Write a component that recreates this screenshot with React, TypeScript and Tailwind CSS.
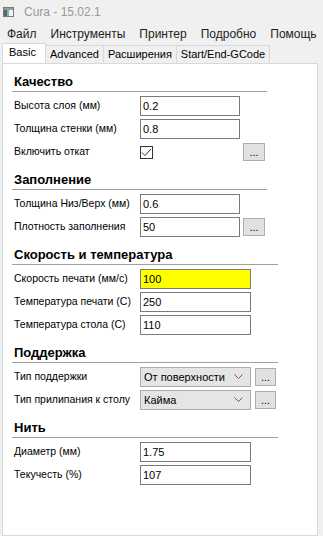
import React from 'react';

const ui = { fontFamily: '"Liberation Sans", Arial, sans-serif' };

const Chevron = () => (
  <svg width="9" height="6" viewBox="0 0 9 6" className="shrink-0">
    <path d="M0.5 0.5 L4.5 4.5 L8.5 0.5" fill="none" stroke="#606060" strokeWidth="1" />
  </svg>
);

const Dots: React.FC<{ w?: string }> = ({ w = 'w-[22px]' }) => (
  <div
    className={`${w} h-[18px] bg-[#e1e1e1] border border-[#adadad] flex items-center justify-center text-[11px] leading-none text-black`}
  >
    ...
  </div>
);

const Field: React.FC<{ value: string; w: string; yellow?: boolean }> = ({ value, w, yellow }) => (
  <div
    className={`${w} h-[20px] border border-[#7a7a7a] flex items-center pl-[2px] text-[11px] text-black ${
      yellow ? 'bg-[#ffff00]' : 'bg-white'
    }`}
  >
    {value}
  </div>
);

const Select: React.FC<{ value: string }> = ({ value }) => (
  <div className="w-[111px] h-[20px] bg-[#e5e5e5] border border-[#acacac] flex items-center justify-between pl-[3px] pr-[7px] text-[11px] text-black">
    <span>{value}</span>
    <Chevron />
  </div>
);

const Row: React.FC<{ label: string; children: React.ReactNode }> = ({ label, children }) => (
  <div className="h-[20px] flex items-center">
    <div className="w-[128px] pl-[2px] text-[10.5px] text-black whitespace-nowrap">{label}</div>
    {children}
  </div>
);

const Section: React.FC<{ title: string; lineW: string; children: React.ReactNode }> = ({
  title,
  lineW,
  children,
}) => (
  <div>
    <div className={`${lineW} h-[28px] border-b border-[#a0a0a0] flex items-end pl-[2px] pb-[1px]`}>
      <span className="text-[13px] leading-[16px] font-bold text-black">{title}</span>
    </div>
    <div className="mt-[4px] flex flex-col gap-[3px]">{children}</div>
  </div>
);

export default function App() {
  return (
    <div className="w-[323px] h-[536px] bg-[#f0f0f0] flex flex-col overflow-hidden" style={ui}>
      {/* title bar */}
      <div className="h-[24px] flex items-center pl-[3px] shrink-0">
        <svg width="11" height="10" viewBox="0 0 11 10">
          <rect x="0.5" y="0.5" width="10" height="9" fill="#f4f4f4" stroke="#7a7a7a" />
          <rect x="1" y="1" width="9" height="2" fill="#9a9a9a" />
          <rect x="1" y="3" width="3" height="6" fill="#4a6a78" />
          <rect x="4" y="3" width="2" height="6" fill="#7fb0a8" />
        </svg>
        <span className="ml-[10px] text-[12px] text-[#999]">Cura - 15.02.1</span>
      </div>

      {/* menu bar */}
      <div className="h-[19px] flex items-center pl-[7px] gap-[14px] text-[12px] text-[#222] whitespace-nowrap shrink-0">
        <span>Файл</span>
        <span>Инструменты</span>
        <span>Принтер</span>
        <span>Подробно</span>
        <span>Помощь</span>
      </div>

      {/* tabs */}
      <div className="h-[20px] flex items-end pl-[2px] text-[11px] text-black shrink-0">
        <div className="w-[44px] h-[20px] bg-white border border-b-0 border-[#d9d9d9] flex items-center pl-[6px] pb-[2px]">
          Basic
        </div>
        <div className="w-[58px] h-[18px] border border-b-0 border-l-0 border-[#d9d9d9] flex items-center justify-center">
          Advanced
        </div>
        <div className="w-[73px] h-[18px] border border-b-0 border-l-0 border-[#d9d9d9] flex items-center justify-center">
          Расширения
        </div>
        <div className="w-[93px] h-[18px] border border-b-0 border-l-0 border-[#d9d9d9] flex items-center justify-center">
          Start/End-GCode
        </div>
      </div>

      {/* panel */}
      <div className="flex-1 ml-[2px] w-[316px] bg-white border border-[#d9d9d9] pl-[9px]">
        <Section title="Качество" lineW="w-[255px]">
          <Row label="Высота слоя (мм)">
            <Field value="0.2" w="w-[100px]" />
          </Row>
          <Row label="Толщина стенки (мм)">
            <Field value="0.8" w="w-[100px]" />
          </Row>
          <Row label="Включить откат">
            <div className="w-[100px] h-[20px] flex items-center">
              <div className="w-[13px] h-[13px] border border-[#333] flex items-center justify-center">
                <svg width="11" height="9" viewBox="0 0 11 9">
                  <path d="M1 4.5 L4 7.5 L10 1" fill="none" stroke="#333" strokeWidth="1" />
                </svg>
              </div>
            </div>
            <div className="ml-[3px]">
              <Dots />
            </div>
          </Row>
        </Section>

        <Section title="Заполнение" lineW="w-[255px]">
          <Row label="Толщина Низ/Верх (мм)">
            <Field value="0.6" w="w-[100px]" />
          </Row>
          <Row label="Плотность заполнения">
            <Field value="50" w="w-[100px]" />
            <div className="ml-[3px]">
              <Dots />
            </div>
          </Row>
        </Section>

        <Section title="Скорость и температура" lineW="w-[266px]">
          <Row label="Скорость печати (мм/с)">
            <Field value="100" w="w-[111px]" yellow />
          </Row>
          <Row label="Температура печати (C)">
            <Field value="250" w="w-[111px]" />
          </Row>
          <Row label="Температура стола (C)">
            <Field value="110" w="w-[111px]" />
          </Row>
        </Section>

        <Section title="Поддержка" lineW="w-[266px]">
          <Row label="Тип поддержки">
            <Select value="От поверхности" />
            <div className="ml-[4px]">
              <Dots w="w-[21px]" />
            </div>
          </Row>
          <Row label="Тип прилипания к столу">
            <Select value="Кайма" />
            <div className="ml-[4px]">
              <Dots w="w-[21px]" />
            </div>
          </Row>
        </Section>

        <Section title="Нить" lineW="w-[266px]">
          <Row label="Диаметр (мм)">
            <Field value="1.75" w="w-[111px]" />
          </Row>
          <Row label="Текучесть (%)">
            <Field value="107" w="w-[111px]" />
          </Row>
        </Section>
      </div>
    </div>
  );
}
